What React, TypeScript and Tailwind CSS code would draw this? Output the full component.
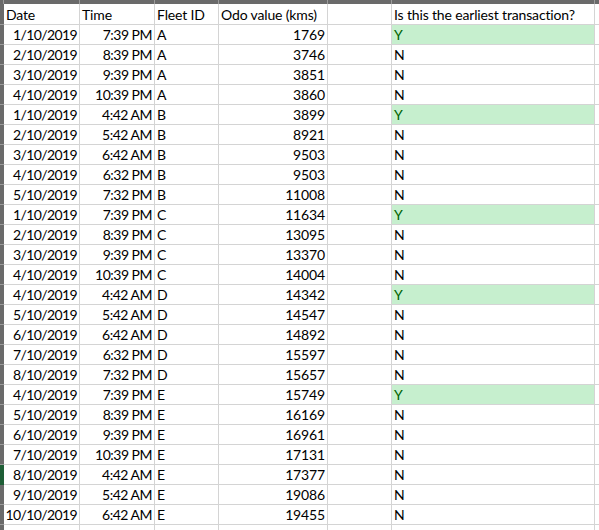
import React from "react";

type Row = { date: string; time: string; fleet: string; odo: number; first: boolean };

const rows: Row[] = [
  { date: "1/10/2019", time: "7:39 PM", fleet: "A", odo: 1769, first: true },
  { date: "2/10/2019", time: "8:39 PM", fleet: "A", odo: 3746, first: false },
  { date: "3/10/2019", time: "9:39 PM", fleet: "A", odo: 3851, first: false },
  { date: "4/10/2019", time: "10:39 PM", fleet: "A", odo: 3860, first: false },
  { date: "1/10/2019", time: "4:42 AM", fleet: "B", odo: 3899, first: true },
  { date: "2/10/2019", time: "5:42 AM", fleet: "B", odo: 8921, first: false },
  { date: "3/10/2019", time: "6:42 AM", fleet: "B", odo: 9503, first: false },
  { date: "4/10/2019", time: "6:32 PM", fleet: "B", odo: 9503, first: false },
  { date: "5/10/2019", time: "7:32 PM", fleet: "B", odo: 11008, first: false },
  { date: "1/10/2019", time: "7:39 PM", fleet: "C", odo: 11634, first: true },
  { date: "2/10/2019", time: "8:39 PM", fleet: "C", odo: 13095, first: false },
  { date: "3/10/2019", time: "9:39 PM", fleet: "C", odo: 13370, first: false },
  { date: "4/10/2019", time: "10:39 PM", fleet: "C", odo: 14004, first: false },
  { date: "4/10/2019", time: "4:42 AM", fleet: "D", odo: 14342, first: true },
  { date: "5/10/2019", time: "5:42 AM", fleet: "D", odo: 14547, first: false },
  { date: "6/10/2019", time: "6:42 AM", fleet: "D", odo: 14892, first: false },
  { date: "7/10/2019", time: "6:32 PM", fleet: "D", odo: 15597, first: false },
  { date: "8/10/2019", time: "7:32 PM", fleet: "D", odo: 15657, first: false },
  { date: "4/10/2019", time: "7:39 PM", fleet: "E", odo: 15749, first: true },
  { date: "5/10/2019", time: "8:39 PM", fleet: "E", odo: 16169, first: false },
  { date: "6/10/2019", time: "9:39 PM", fleet: "E", odo: 16961, first: false },
  { date: "7/10/2019", time: "10:39 PM", fleet: "E", odo: 17131, first: false },
  { date: "8/10/2019", time: "4:42 AM", fleet: "E", odo: 17377, first: false },
  { date: "9/10/2019", time: "5:42 AM", fleet: "E", odo: 19086, first: false },
  { date: "10/10/2019", time: "6:42 AM", fleet: "E", odo: 19455, first: false },
];

// every cell carries its own right + bottom gridline
const cell = "shrink-0 border-r border-b border-[#d4d4d4] px-[2px] pb-[1px] flex items-end whitespace-nowrap";

function TopStrip() {
  return (
    <div className="flex h-[4px] bg-[#6a6a6a]">
      <div className="w-[4px] shrink-0 border-r border-[#9b9b9b]" />
      <div className="w-[76px] shrink-0 border-r border-[#9b9b9b]" />
      <div className="w-[75px] shrink-0 border-r border-[#9b9b9b]" />
      <div className="w-[64px] shrink-0 border-r border-[#9b9b9b]" />
      <div className="w-[109px] shrink-0 border-r border-[#9b9b9b]" />
      <div className="w-[64px] shrink-0 border-r border-[#9b9b9b]" />
      <div className="w-[203px] shrink-0 border-r border-[#9b9b9b]" />
      <div className="flex-1" />
    </div>
  );
}

function RowHead({ active }: { active?: boolean }) {
  return (
    <div
      className={`w-[4px] shrink-0 border-b ${active ? "bg-[#1e5e36] border-[#1e5e36]" : "bg-[#6a6a6a] border-[#9b9b9b]"}`}
    />
  );
}

export default function App() {
  return (
    <div
      className="w-[599px] h-[530px] overflow-hidden bg-white text-black text-[14px] leading-[16px] tracking-[-0.15px]"
      style={{ fontFamily: "Lato, 'Open Sans', sans-serif" }}
    >
      <TopStrip />

      {/* header row */}
      <div className="flex h-[21px]">
        <RowHead />
        <div className={`${cell} w-[76px]`}>Date</div>
        <div className={`${cell} w-[75px]`}>Time</div>
        <div className={`${cell} w-[64px]`}>Fleet ID</div>
        <div className={`${cell} w-[109px]`}>Odo value (kms)</div>
        <div className={`${cell} w-[64px]`} />
        <div className={`${cell} w-[203px]`}>Is this the earliest transaction?</div>
        <div className={`${cell} flex-1`} />
      </div>

      {rows.map((r, i) => (
        <div key={i} className="flex h-[20px]">
          <RowHead active={i === 22} />
          <div className={`${cell} w-[76px] justify-end tracking-[-0.6px]`}>{r.date}</div>
          <div className={`${cell} w-[75px] justify-end tracking-[-0.5px]`}>{r.time}</div>
          <div className={`${cell} w-[64px]`}>{r.fleet}</div>
          <div className={`${cell} w-[109px] justify-end`}>{r.odo}</div>
          <div className={`${cell} w-[64px]`} />
          <div className={`${cell} w-[203px] ${r.first ? "bg-[#c6efce] text-[#006100]" : ""}`}>
            {r.first ? "Y" : "N"}
          </div>
          <div className={`${cell} flex-1`} />
        </div>
      ))}

      {/* blank rows below the data */}
      {[0, 1].map((k) => (
        <div key={k} className="flex h-[20px]">
          <RowHead />
          <div className={`${cell} w-[76px]`} />
          <div className={`${cell} w-[75px]`} />
          <div className={`${cell} w-[64px]`} />
          <div className={`${cell} w-[109px]`} />
          <div className={`${cell} w-[64px]`} />
          <div className={`${cell} w-[203px]`} />
          <div className={`${cell} flex-1`} />
        </div>
      ))}
    </div>
  );
}
